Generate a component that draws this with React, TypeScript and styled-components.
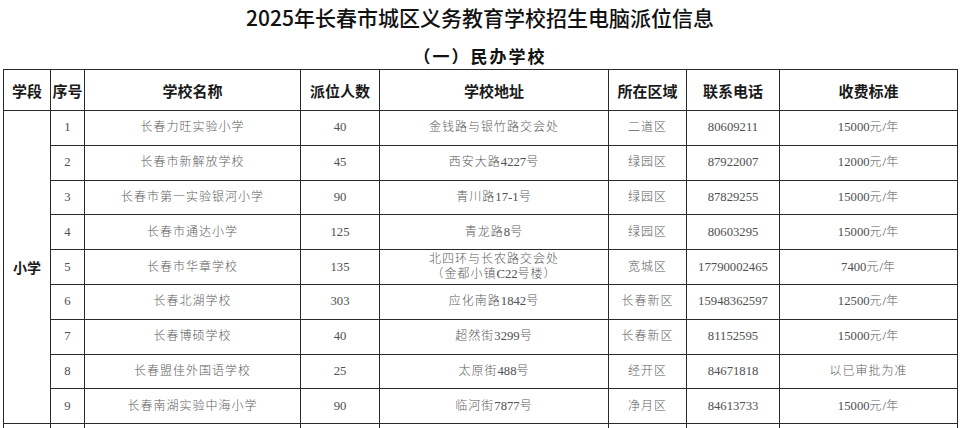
import styled, { createGlobalStyle } from 'styled-components';

const GlobalStyle = createGlobalStyle`
  html, body {
    margin: 0;
    padding: 0;
    background: #fff;
    overflow: hidden;
  }
  body {
    font-family: "Noto Sans CJK SC", sans-serif;
    color: #111;
  }
`;

const Page = styled.main`
  width: 960px;
`;

const Title = styled.h1`
  margin: 0;
  height: 34px;
  line-height: 34px;
  text-align: center;
  font-size: 21px;
  font-weight: 500;
  color: #111;
`;

const Subtitle = styled.h2`
  margin: 10px 0 1px;
  line-height: 24px;
  text-align: center;
  font-size: 17px;
  font-weight: 700;
  letter-spacing: 2px;
  color: #111;
`;

const Table = styled.table`
  margin-left: 3px;
  width: 954px;
  table-layout: fixed;
  border-collapse: collapse;
`;

const HeadRow = styled.tr`
  height: 41px;
`;

const Row = styled.tr`
  height: 34.8px;
`;

const HeadCell = styled.th`
  border: 1px solid #2a2a2a;
  padding: 0;
  font-size: 15px;
  font-weight: 700;
  color: #1a1a1a;
  text-align: center;
  vertical-align: middle;
  white-space: nowrap;
`;

const StageCell = styled.td`
  border: 1px solid #2a2a2a;
  padding: 0;
  font-size: 14px;
  font-weight: 700;
  color: #1a1a1a;
  text-align: center;
  vertical-align: middle;
`;

const Cell = styled.td`
  border: 1px solid #2a2a2a;
  padding: 0;
  font-family: "Liberation Serif", "Noto Sans CJK SC", serif;
  font-size: 12.7px;
  line-height: 15px;
  color: #505050;
  text-align: center;
  vertical-align: middle;
  white-space: nowrap;
`;

const Han = styled.span`
  font-size: 12px;
  font-weight: 300;
  letter-spacing: 1px;
  color: #5c5c5c;
`;

const Line = styled.div``;

type School = {
  no: number;
  name: string;
  seats: number;
  address: string[];
  district: string;
  phone: string;
  fee: string;
};

const schools: School[] = [
  { no: 1, name: '长春力旺实验小学', seats: 40, address: ['金钱路与银竹路交会处'], district: '二道区', phone: '80609211', fee: '15000元/年' },
  { no: 2, name: '长春市新解放学校', seats: 45, address: ['西安大路4227号'], district: '绿园区', phone: '87922007', fee: '12000元/年' },
  { no: 3, name: '长春市第一实验银河小学', seats: 90, address: ['青川路17-1号'], district: '绿园区', phone: '87829255', fee: '15000元/年' },
  { no: 4, name: '长春市通达小学', seats: 125, address: ['青龙路8号'], district: '绿园区', phone: '80603295', fee: '15000元/年' },
  { no: 5, name: '长春市华章学校', seats: 135, address: ['北四环与长农路交会处', '（金都小镇C22号楼）'], district: '宽城区', phone: '17790002465', fee: '7400元/年' },
  { no: 6, name: '长春北湖学校', seats: 303, address: ['应化南路1842号'], district: '长春新区', phone: '15948362597', fee: '12500元/年' },
  { no: 7, name: '长春博硕学校', seats: 40, address: ['超然街3299号'], district: '长春新区', phone: '81152595', fee: '15000元/年' },
  { no: 8, name: '长春盟佳外国语学校', seats: 25, address: ['太原街488号'], district: '经开区', phone: '84671818', fee: '以已审批为准' },
  { no: 9, name: '长春南湖实验中海小学', seats: 90, address: ['临河街7877号'], district: '净月区', phone: '84613733', fee: '15000元/年' },
];

const columns = [
  { label: '学段', width: 47 },
  { label: '序号', width: 34 },
  { label: '学校名称', width: 216 },
  { label: '派位人数', width: 79 },
  { label: '学校地址', width: 229 },
  { label: '所在区域', width: 78 },
  { label: '联系电话', width: 93 },
  { label: '收费标准', width: 178 },
];

// CJK runs get the wider tracking of the source PDF, digits stay tight
const HAN = /([\u3000-\u303f\u4e00-\u9fff\uff00-\uffef]+)/;

function spaced(text: string) {
  return text.split(HAN).map((part, i) =>
    i % 2 === 1 ? <Han key={i}>{part}</Han> : part
  );
}

export default function App() {
  return (
    <Page>
      <GlobalStyle />
      <Title>2025年长春市城区义务教育学校招生电脑派位信息</Title>
      <Subtitle>（一）民办学校</Subtitle>
      <Table>
        <colgroup>
          {columns.map((c) => (
            <col key={c.label} style={{ width: c.width }} />
          ))}
        </colgroup>
        <thead>
          <HeadRow>
            {columns.map((c) => (
              <HeadCell key={c.label}>{c.label}</HeadCell>
            ))}
          </HeadRow>
        </thead>
        <tbody>
          {schools.map((s, idx) => (
            <Row key={s.no}>
              {idx === 0 && <StageCell rowSpan={schools.length}>小学</StageCell>}
              <Cell>{s.no}</Cell>
              <Cell>{spaced(s.name)}</Cell>
              <Cell>{s.seats}</Cell>
              <Cell>
                {s.address.map((line) => (
                  <Line key={line}>{spaced(line)}</Line>
                ))}
              </Cell>
              <Cell>{spaced(s.district)}</Cell>
              <Cell>{s.phone}</Cell>
              <Cell>{spaced(s.fee)}</Cell>
            </Row>
          ))}
          <Row>
            {columns.map((c) => (
              <Cell key={c.label} />
            ))}
          </Row>
        </tbody>
      </Table>
    </Page>
  );
}
